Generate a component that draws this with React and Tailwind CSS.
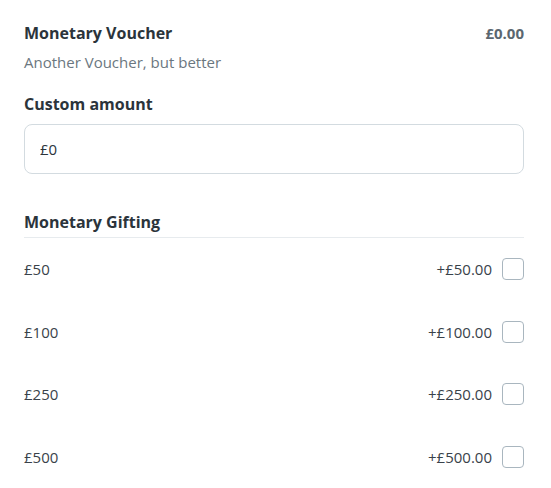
import { useState } from "react"

const options = [
  { label: "£50", price: "+£50.00" },
  { label: "£100", price: "+£100.00" },
  { label: "£250", price: "+£250.00" },
  { label: "£500", price: "+£500.00" },
]

export default function App() {
  const [amount, setAmount] = useState("£0")
  const [checked, setChecked] = useState({})

  return (
    <div className="min-h-screen bg-white font-['Open_Sans',sans-serif] text-[#2b343b]">
      <div className="pl-6 pr-[27px] pt-[21px]">
        <div className="flex items-center justify-between h-6">
          <h2 className="text-base font-bold leading-6">Monetary Voucher</h2>
          <span className="text-[15px] font-bold text-[#5b6770]">£0.00</span>
        </div>
        <p className="mt-[6px] text-[15px] leading-[22px] text-[#6b7780]">Another Voucher, but better</p>

        <label className="mt-[19px] block text-base font-bold leading-6">Custom amount</label>
        <input
          value={amount}
          onChange={(e) => setAmount(e.target.value)}
          className="mt-2 block h-[50px] w-full rounded-lg border border-[#d3dbe0] px-[15px] text-[15px] text-[#2b343b] outline-none"
        />

        <div className="mt-9 border-b border-[#e7ebee] pb-[3px]">
          <h3 className="text-base font-bold leading-6">Monetary Gifting</h3>
        </div>

        {options.map((opt) => (
          <div key={opt.label} className="flex h-[62.5px] items-center justify-between text-[15px] text-[#39424a]">
            <span>{opt.label}</span>
            <div className="flex items-center gap-[10px]">
              <span>{opt.price}</span>
              <button
                onClick={() => setChecked({ ...checked, [opt.label]: !checked[opt.label] })}
                className={`h-[22px] w-[22px] rounded-[4px] border border-[#a9b6bf] ${checked[opt.label] ? "bg-[#5b6770]" : "bg-white"}`}
              />
            </div>
          </div>
        ))}
      </div>
    </div>
  )
}
